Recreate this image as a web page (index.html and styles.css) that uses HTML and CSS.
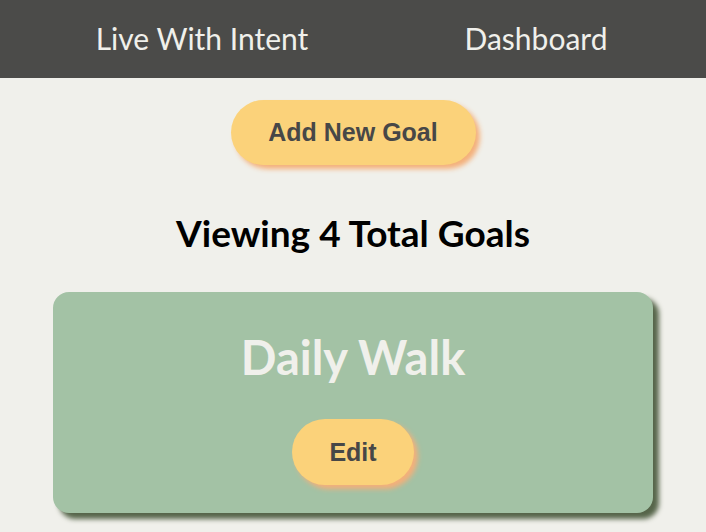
FILE: index.html
```html
<!DOCTYPE html>
<html>
<head>
<meta charset="utf-8">
<link rel="stylesheet" href="styles.css">
</head>
<body>
<nav class="nav">
  <a class="nav-link">Live With Intent</a>
  <a class="nav-link">Dashboard</a>
</nav>
<main class="main">
  <button class="btn btn-add">Add New Goal</button>
  <h2 class="count">Viewing 4 Total Goals</h2>
  <section class="card">
    <h1 class="card-title">Daily Walk</h1>
    <button class="btn btn-edit">Edit</button>
  </section>
</main>
</body>
</html>
```
FILE: styles.css
```css
* { box-sizing: border-box; }
html, body { margin: 0; padding: 0; }
body {
  background: #f0f0eb;
  font-family: "Lato", "Noto Sans", sans-serif;
  width: 706px;
  height: 532px;
  overflow: hidden;
}
.nav {
  height: 78px;
  background: #4b4b49;
  display: grid;
  grid-template-columns: 404px 264px;
  align-items: center;
  padding-bottom: 2px;
}
.nav-link {
  color: #f0f0eb;
  font-size: 30px;
  font-weight: 400;
  text-align: center;
  justify-self: center;
}
.main {
  display: flex;
  flex-direction: column;
  align-items: center;
  padding-top: 22px;
}
.btn {
  border: none;
  background: #fbd27a;
  color: #474747;
  font-family: "Liberation Sans", Arial, sans-serif;
  font-weight: 700;
  font-size: 25px;
  border-radius: 40px;
  box-shadow: 4px 4px 5px #f4b07a;
}
.btn-add {
  width: 245px;
  height: 65px;
}
.count {
  margin: 47px 0 0;
  font-size: 37px;
  font-weight: 700;
  color: #000;
  line-height: 42px;
}
.card {
  margin-top: 38px;
  width: 600px;
  height: 221px;
  background: #a3c2a5;
  border-radius: 16px;
  box-shadow: 6px 6px 5px #56654a;
  display: flex;
  flex-direction: column;
  align-items: center;
  padding-top: 38px;
}
.card-title {
  margin: 0;
  color: #f0f0eb;
  font-size: 47px;
  font-weight: 700;
  line-height: 54px;
}
.btn-edit {
  margin-top: 35px;
  width: 122px;
  height: 66px;
}
```
